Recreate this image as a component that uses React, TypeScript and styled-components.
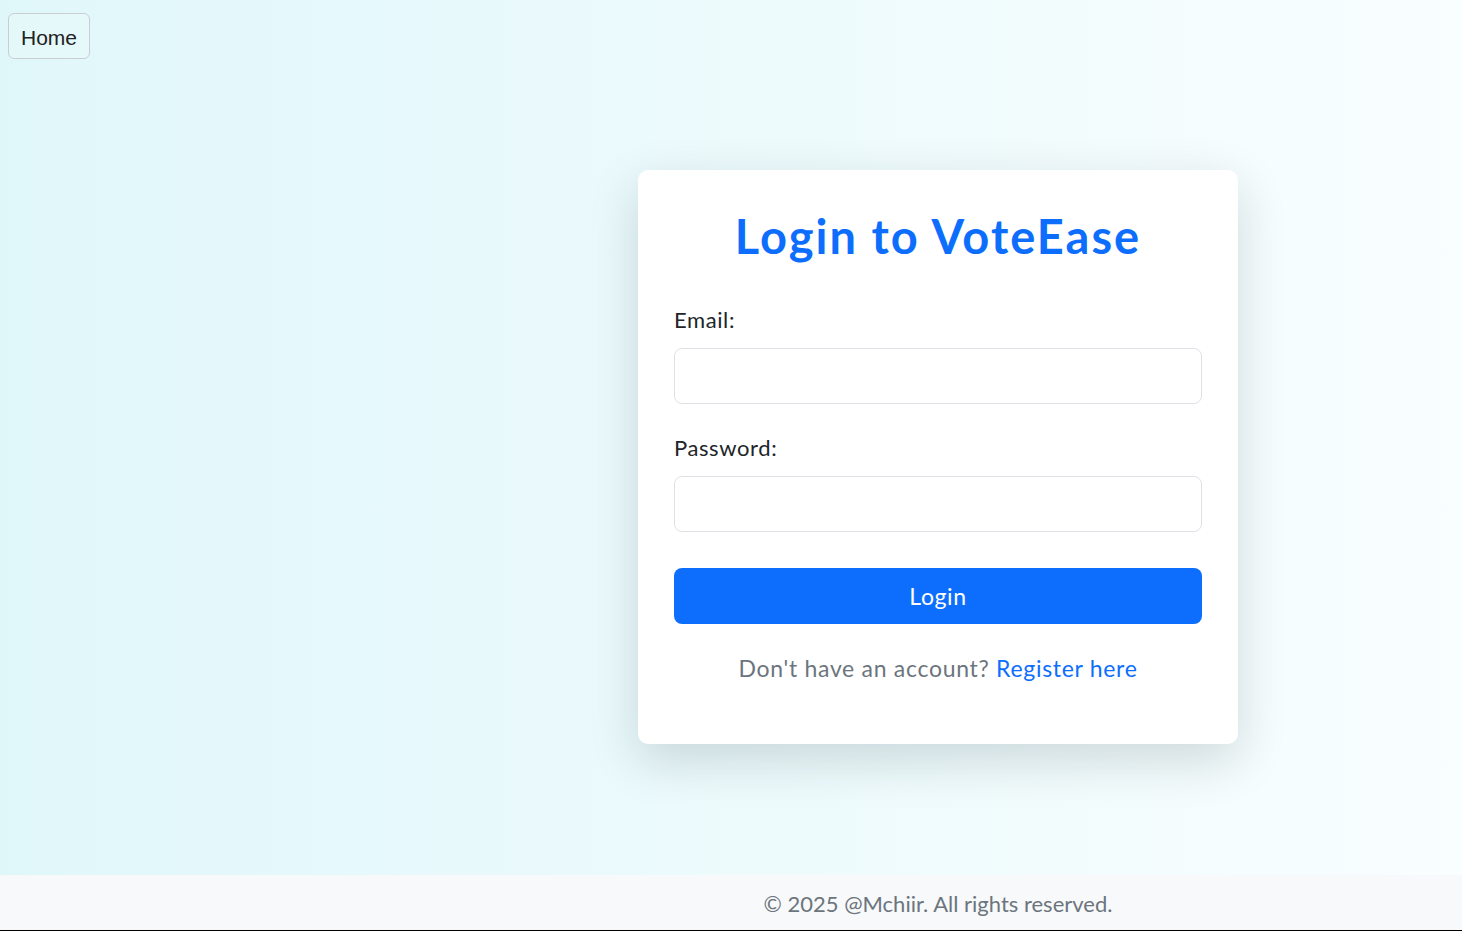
import React from "react";
import styled, { createGlobalStyle } from "styled-components";

const Global = createGlobalStyle`
  html { background: #000; }
  body { margin: 0; font-family: "Lato", "Noto Sans", sans-serif; }
  * { box-sizing: border-box; }
`;

const Page = styled.div`
  height: 930px;
  display: grid;
  grid-template-columns: 414px 1fr;
  grid-template-rows: 1fr 55px;
  background: linear-gradient(to right, #e0f7fa, #f9feff);
  overflow: hidden;
`;

const Side = styled.aside`
  padding: 13px 8px;
`;

const HomeButton = styled.button`
  font-family: "Liberation Sans", Arial, sans-serif;
  font-size: 21px;
  line-height: 1;
  color: #222;
  height: 46px;
  padding: 2px 12px 0;
  background: rgba(255, 255, 255, 0.15);
  border: 1px solid #c8cfd2;
  border-radius: 6px;
`;

const Main = styled.main`
  display: flex;
  align-items: center;
  justify-content: center;
  padding-top: 39px;
`;

const Card = styled.div`
  width: 600px;
  height: 574px;
  background: #fff;
  border-radius: 10px;
  box-shadow: 0 16px 50px rgba(0, 30, 40, 0.16);
  padding: 36px 36px 0;
  display: flex;
  flex-direction: column;
`;

const Title = styled.h2`
  margin: 0 0 39px;
  text-align: center;
  font-size: 47px;
  letter-spacing: 2px;
  line-height: 60px;
  font-weight: 700;
  color: #0d6efd;
`;

const Label = styled.label`
  display: block;
  font-size: 22px;
  letter-spacing: 0.6px;
  line-height: 30px;
  color: #212529;
  margin-bottom: 13px;
`;

const Input = styled.input<{ $mb?: number }>`
  display: block;
  width: 100%;
  height: 56px;
  border: 1px solid #dee2e6;
  border-radius: 8px;
  background: #fff;
  font-size: 20px;
  padding: 0 16px;
  margin-bottom: ${(p) => p.$mb ?? 28}px;
  outline: none;
`;

const Submit = styled.button`
  width: 100%;
  height: 56px;
  border: none;
  border-radius: 8px;
  background: #0d6efd;
  color: #fff;
  font-family: "Lato", "Noto Sans", sans-serif;
  font-size: 23px;
  letter-spacing: 0.6px;
  margin-bottom: 28px;
`;

const Note = styled.p`
  margin: 0;
  text-align: center;
  font-size: 23px;
  letter-spacing: 0.7px;
  line-height: 33px;
  color: #6c757d;
`;

const Link = styled.a`
  color: #0d6efd;
  text-decoration: none;
`;

const Footer = styled.footer`
  grid-column: 1 / -1;
  background: #f8f9fa;
  padding-left: 414px;
  padding-top: 2px;
  display: flex;
  align-items: center;
  justify-content: center;
  font-size: 22px;
  color: #6c757d;
`;

export default function App() {
  return (
    <>
      <Global />
      <Page>
        <Side>
          <HomeButton>Home</HomeButton>
        </Side>
        <Main>
          <Card>
            <Title>Login to VoteEase</Title>
            <Label>Email:</Label>
            <Input type="email" $mb={29} />
            <Label>Password:</Label>
            <Input type="password" $mb={36} />
            <Submit>Login</Submit>
            <Note>
              Don't have an account? <Link href="#">Register here</Link>
            </Note>
          </Card>
        </Main>
        <Footer>© 2025 @Mchiir. All rights reserved.</Footer>
      </Page>
    </>
  );
}
